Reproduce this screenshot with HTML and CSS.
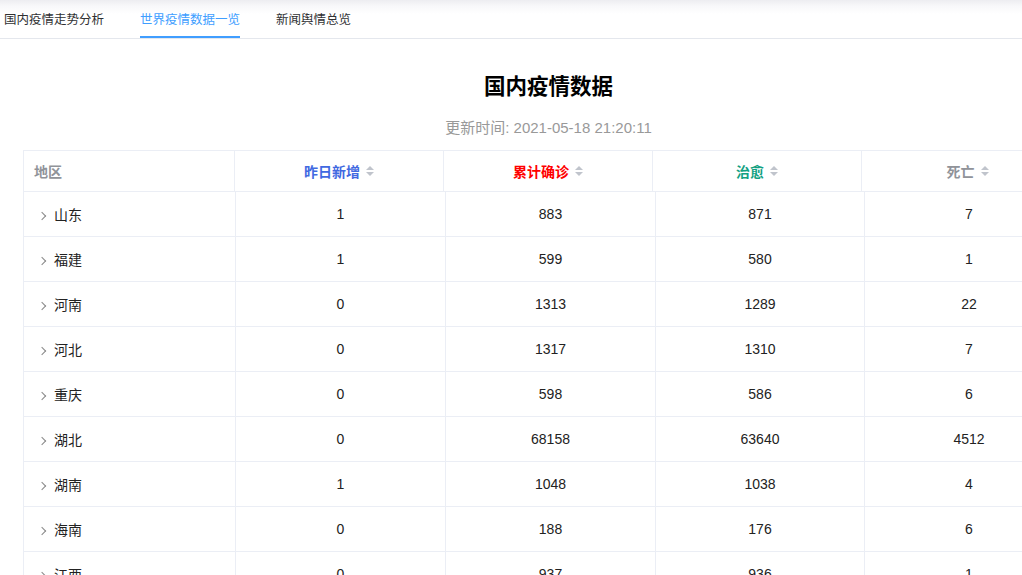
FILE: index.html
```html
<!DOCTYPE html>
<html lang="zh-CN">

<head>
  <meta charset="UTF-8">
  <title>疫情数据</title>
  <link rel="stylesheet" href="styles.css">
</head>

<body>
  <div class="page">
    <!-- 顶部标签 -->
    <div class="tabs">
      <div class="tab">国内疫情走势分析</div>
      <div class="tab active">世界疫情数据一览</div>
      <div class="tab">新闻舆情总览</div>
    </div>

    <h2 class="title">国内疫情数据</h2>
    <p class="time">更新时间: 2021-05-18 21:20:11</p>

    <div class="table">
      <div class="thead">
        <div class="th left">地区</div>
        <div class="th add">昨日新增<span class="sort"></span></div>
        <div class="th confirm">累计确诊<span class="sort"></span></div>
        <div class="th heal">治愈<span class="sort"></span></div>
        <div class="th dead">死亡<span class="sort"></span></div>
      </div>
      <div class="tbody" id="tbody"></div>
    </div>
  </div>

  <script>
    var data = [
      ['山东', 1, 883, 871, 7],
      ['福建', 1, 599, 580, 1],
      ['河南', 0, 1313, 1289, 22],
      ['河北', 0, 1317, 1310, 7],
      ['重庆', 0, 598, 586, 6],
      ['湖北', 0, 68158, 63640, 4512],
      ['湖南', 1, 1048, 1038, 4],
      ['海南', 0, 188, 176, 6],
      ['江西', 0, 937, 936, 1]
    ];
    var tbody = document.getElementById('tbody');
    var html = '';
    for (var i = 0; i < data.length; i++) {
      var row = data[i];
      html += '<div class="tr">';
      html += '<div class="td left"><span class="arrow"></span>' + row[0] + '</div>';
      for (var j = 1; j < row.length; j++) {
        html += '<div class="td">' + row[j] + '</div>';
      }
      html += '</div>';
    }
    tbody.innerHTML = html;
  </script>
</body>

</html>
```

FILE: styles.css
```css
html,
body {
  margin: 0;
  padding: 0;
  background-color: #FFF;
  overflow: hidden;
}

body {
  font-family: "Liberation Sans", "Noto Sans CJK SC", sans-serif;
  color: #222;
}

.page {
  width: 1097px;
}

.tabs {
  display: flex;
  height: 38px;
  border-bottom: 1px solid #E4E7ED;
  background: linear-gradient(#EDEDF1 0, #F8F8FA 6px, #FFF 14px);
  padding-left: 4px;
}

.tab {
  font-size: 12.5px;
  line-height: 40px;
  height: 38px;
  box-sizing: border-box;
  color: #303133;
  margin-right: 36px;
}

.tab.active {
  color: #409EFF;
  border-bottom: 2px solid #409EFF;
}

.title {
  margin: 0;
  padding-top: 33px;
  text-align: center;
  font-size: 21.5px;
  line-height: 30px;
  font-weight: bold;
  color: #000;
}

.time {
  margin: 15px 0 0;
  text-align: center;
  font-size: 15px;
  line-height: 22px;
  color: #999;
}

.table {
  margin: 11px 23px 0;
  border-left: 1px solid #EBEEF5;
  border-top: 1px solid #EBEEF5;
}

.thead,
.tr {
  display: grid;
  grid-template-columns: 211px 209px 209px 209px 1fr;
  border-bottom: 1px solid #EBEEF5;
}

.tr {
  grid-template-columns: 212px 210px 210px 209px 1fr;
}

.th {
  height: 40px;
  display: flex;
  align-items: center;
  justify-content: center;
  font-size: 14px;
  font-weight: bold;
  border-right: 1px solid #EBEEF5;
  color: #909399;
}

.th.left {
  justify-content: flex-start;
  padding-left: 10px;
}

.th.add {
  color: #4169E1;
}

.th.confirm {
  color: #FF0000;
}

.th.heal {
  color: #12A182;
}

.sort {
  display: inline-block;
  position: relative;
  width: 8px;
  height: 12px;
  margin-left: 6px;
}

.sort::before,
.sort::after {
  content: "";
  position: absolute;
  left: 0;
  border-left: 4px solid transparent;
  border-right: 4px solid transparent;
}

.sort::before {
  top: 1px;
  border-bottom: 4.5px solid #C0C4CC;
}

.sort::after {
  bottom: 1px;
  border-top: 4.5px solid #C0C4CC;
}

.td {
  height: 44px;
  display: flex;
  align-items: center;
  justify-content: center;
  font-size: 14px;
  border-right: 1px solid #EBEEF5;
}

.td.left {
  justify-content: flex-start;
  padding-left: 15px;
}

.arrow {
  display: inline-block;
  width: 5px;
  height: 5px;
  border-right: 1px solid #888;
  border-top: 1px solid #888;
  transform: rotate(45deg);
  margin-top: 3px;
  margin-right: 9px;
}
```
